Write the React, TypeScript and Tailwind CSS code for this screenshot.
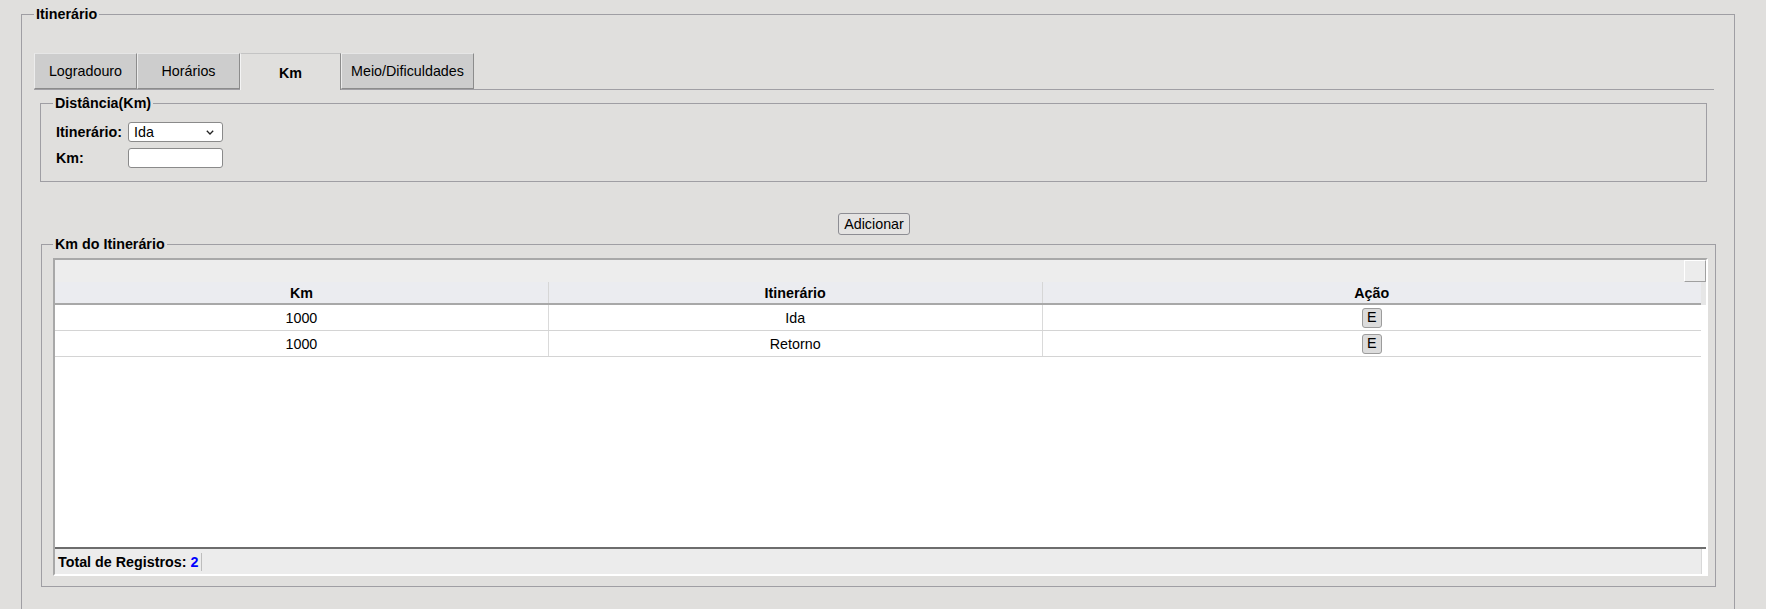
import { useState } from "react";

const tabs = ["Logradouro", "Horários", "Km", "Meio/Dificuldades"];

const tabWidths: Record<string, string> = {
    "Logradouro": "w-[103px]",
    "Horários": "w-[103px]",
    "Km": "w-[101px]",
    "Meio/Dificuldades": "w-[133px]",
};

const registros = [
    { km: "1000", itinerario: "Ida" },
    { km: "1000", itinerario: "Retorno" },
];

function ChevronDown() {
    return (
        <svg width="8" height="5" viewBox="0 0 8 5" fill="none">
            <path d="M0.8 0.8L4 4L7.2 0.8" stroke="#222" strokeWidth="1.3" />
        </svg>
    );
}

export default function App() {
    const [activeTab, setActiveTab] = useState("Km");
    const [itinerario, setItinerario] = useState("Ida");
    const [km, setKm] = useState("");

    return (
        <div className="h-[609px] overflow-hidden bg-[#e0dfdd] pt-[6px] pl-[21px] pr-[31px] font-['Liberation_Sans',Arial,sans-serif] text-[14.3px] leading-[18px] text-black">
            <fieldset className="border border-[#9f9ea3] pl-[12px] pr-[20px] pb-[60px]">
                <legend className="px-[2px] font-bold leading-[16px]">Itinerário</legend>

                {/* Abas */}
                <div className="mt-[31px] flex border-b border-[#a09fa4]">
                    {tabs.map(tab => {
                        const active = tab === activeTab;
                        return (
                            <button
                                key={tab}
                                type="button"
                                onClick={() => setActiveTab(tab)}
                                className={
                                    active
                                        ? `${tabWidths[tab]} -mb-px h-[37px] border-t border-l border-r border-t-[#c4c4c4] border-l-[#f4f4f4] border-r-[#8c8c8c] bg-[#e0dfdd] pt-[2px] text-center font-bold leading-[16px]`
                                        : `${tabWidths[tab]} h-[36px] border border-t-[#e6e6e6] border-l-[#ececec] border-r-[#8c8c8c] border-b-[#8c8c8c] bg-[#cdcdcd] text-center leading-[16px]`
                                }
                            >
                                {tab}
                            </button>
                        );
                    })}
                </div>

                {/* Distância */}
                <fieldset className="mt-[5px] ml-[6px] mr-[7px] border border-[#9f9ea3] pl-[12px] pb-[13px]">
                    <legend className="px-[2px] font-bold leading-[16px]">Distância(Km)</legend>

                    <div className="mt-[11px] flex h-[20px] items-center pl-[3px]">
                        <span className="w-[72px] font-bold">Itinerário:</span>
                        <div className="flex h-[20px] w-[95px] items-center rounded-[3px] border border-[#8a8a8a] bg-white pr-[8px]">
                            <select
                                value={itinerario}
                                onChange={e => setItinerario(e.target.value)}
                                className="h-full flex-1 appearance-none bg-transparent pl-[5px] leading-[18px] outline-none"
                            >
                                <option>Ida</option>
                                <option>Retorno</option>
                            </select>
                            <ChevronDown />
                        </div>
                    </div>

                    <div className="mt-[6px] flex h-[20px] items-center pl-[3px]">
                        <span className="w-[72px] font-bold">Km:</span>
                        <input
                            type="text"
                            value={km}
                            onChange={e => setKm(e.target.value)}
                            className="h-[20px] w-[95px] rounded-[3px] border border-[#8a8a8a] bg-white px-[4px] outline-none"
                        />
                    </div>
                </fieldset>

                <div className="mt-[31px] flex justify-center">
                    <button type="button" className="h-[22px] w-[72px] rounded-[3px] border border-[#8d8d93] bg-[#e4e3e2] leading-[18px]">
                        Adicionar
                    </button>
                </div>

                {/* Km do Itinerário */}
                <fieldset className="mt-[1px] ml-[7px] -mr-[2px] border border-[#9f9ea3] pl-[11px] pr-[7px] pb-[10px]">
                    <legend className="px-[2px] font-bold leading-[16px]">Km do Itinerário</legend>

                    <div className="mt-[6px] flex h-[318px] flex-col border-2 border-t-[#a8a8a8] border-l-[#a8a8a8] border-r-white border-b-white">
                        {/* faixa superior */}
                        <div className="flex h-[22px] justify-end bg-[#ededed]">
                            <div className="h-[22px] w-[22px] border border-t-white border-l-white border-r-[#a0a0a0] border-b-[#a0a0a0] bg-[#ececec]" />
                        </div>

                        {/* cabeçalho */}
                        <div className="flex">
                            <div className="grid h-[23px] flex-1 grid-cols-[30%_30%_40%] border-b-2 border-[#a8a8a8] bg-[#ebecf0] font-bold">
                                <div className="flex items-center justify-center border-r border-[#d6d6d6]">Km</div>
                                <div className="flex items-center justify-center border-r border-[#d6d6d6]">Itinerário</div>
                                <div className="flex items-center justify-center">Ação</div>
                            </div>
                            <div className="h-[23px] w-[5px] bg-[#e6e6e6]" />
                        </div>

                        {/* linhas */}
                        <div className="flex-1 bg-white pr-[5px]">
                            {registros.map((r, index) => (
                                <div key={index} className="grid h-[26px] grid-cols-[30%_30%_40%] border-b border-[#d4d4d4]">
                                    <div className="flex items-center justify-center border-r border-[#dadada]">{r.km}</div>
                                    <div className="flex items-center justify-center border-r border-[#dadada]">{r.itinerario}</div>
                                    <div className="flex items-center justify-center">
                                        <button type="button" className="flex h-[20px] w-[20px] items-center justify-center rounded-[3px] border border-[#9c9c9c] bg-[#dcdcdc] leading-none">
                                            E
                                        </button>
                                    </div>
                                </div>
                            ))}
                        </div>

                        {/* rodapé */}
                        <div className="flex h-[27px] border-t-2 border-[#6d6d6d] bg-white pr-[4px]">
                            <div className="flex flex-1 items-center border-r border-[#d8d8d8] bg-[#ececec] pl-[3px]">
                                <span className="border-r border-[#bdbdbd] pr-[3px] font-bold leading-[18px]">
                                    Total de Registros: <span className="text-[#0000ff]">{registros.length}</span>
                                </span>
                            </div>
                        </div>
                    </div>
                </fieldset>
            </fieldset>
        </div>
    );
}
